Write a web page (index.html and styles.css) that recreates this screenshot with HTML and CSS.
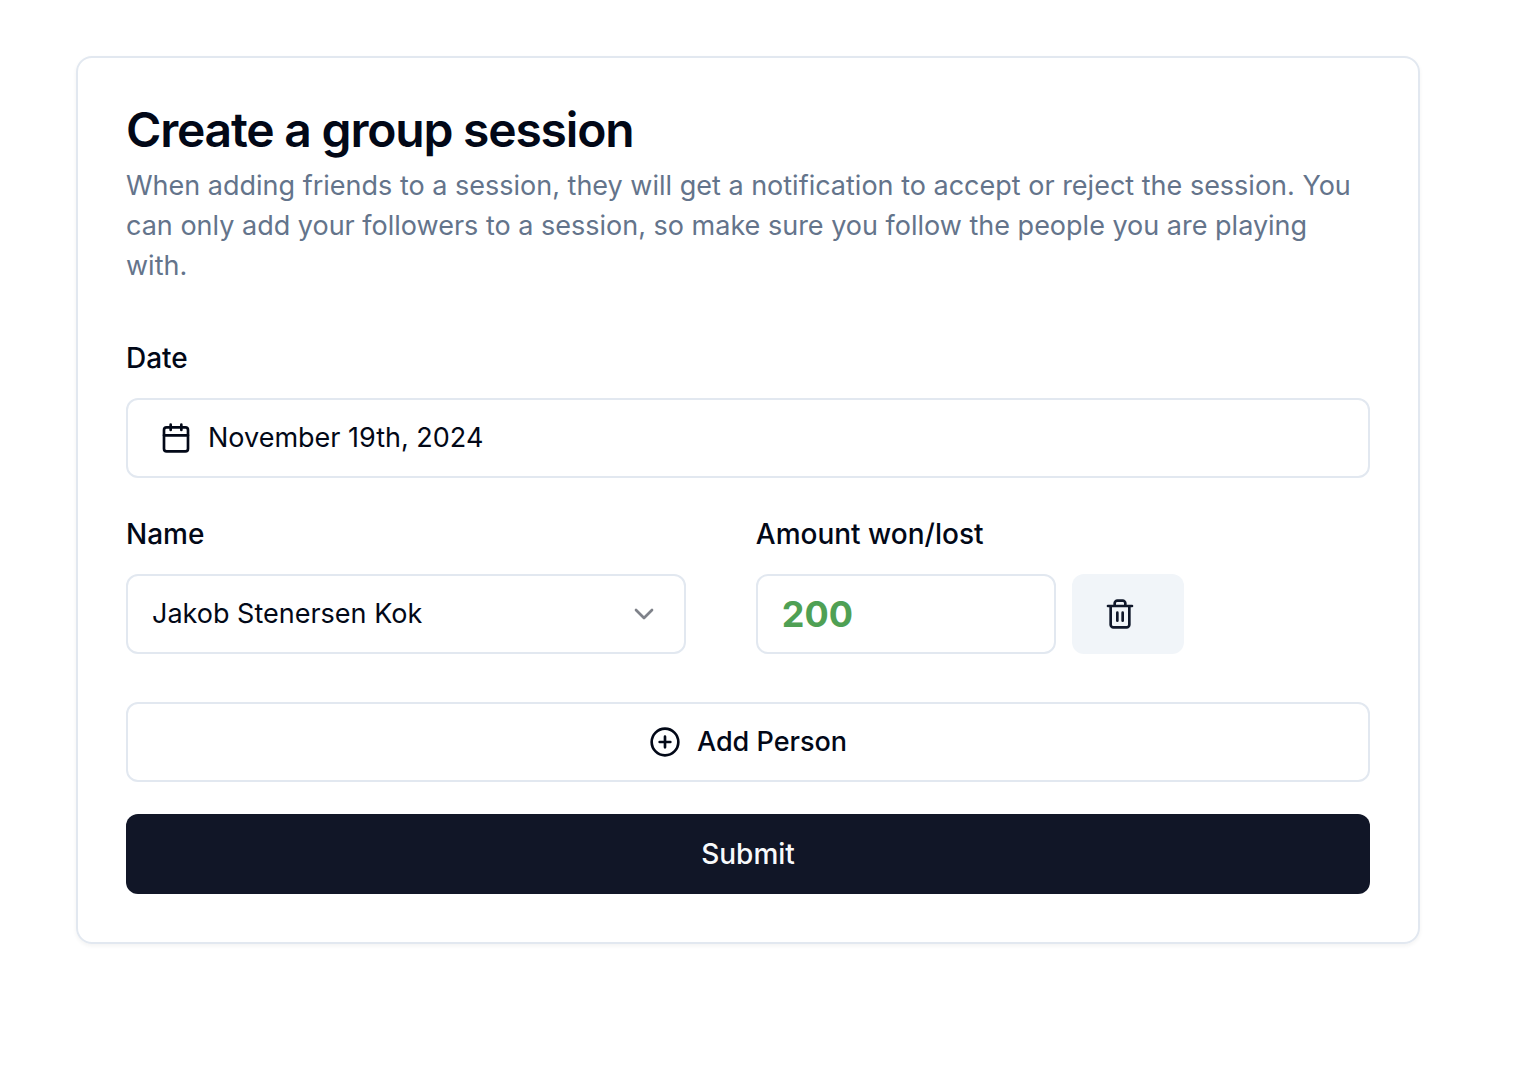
FILE: index.html
```html
<!DOCTYPE html>
<html lang="en">
<head>
<meta charset="utf-8">
<meta name="viewport" content="width=device-width, initial-scale=1">
<title>Create a group session</title>
<link rel="stylesheet" href="styles.css">
</head>
<body>
<main class="page">
  <section class="card">
    <header class="card-header">
      <h1 class="title">Create a group session</h1>
      <p class="description">When adding friends to a session, they will get a notification to accept or reject the session. You can only add your followers to a session, so make sure you follow the people you are playing with.</p>
    </header>
    <form class="form">
      <div class="field">
        <label class="label" for="date">Date</label>
        <button class="control date-button" id="date" type="button">
          <svg class="icon" viewBox="0 0 24 24" aria-hidden="true"><path d="M8 2v4M16 2v4M3 10h18"/><rect x="3" y="4" width="18" height="18" rx="2"/></svg>
          <span>November 19th, 2024</span>
        </button>
      </div>
      <div class="person">
        <div class="field">
          <label class="label" for="name">Name</label>
          <div class="select-wrap">
            <select class="control select" id="name"><option>Jakob Stenersen Kok</option></select>
            <svg class="icon chevron" viewBox="0 0 24 24" aria-hidden="true"><path d="m6 9 6 6 6-6"/></svg>
          </div>
        </div>
        <div class="field">
          <label class="label" for="amount">Amount won/lost</label>
          <div class="amount-row">
            <input class="control amount" id="amount" type="text" inputmode="numeric" value="200">
            <button class="delete" type="button" aria-label="Remove person">
              <svg class="icon" viewBox="0 0 24 24" aria-hidden="true"><path d="M3 6h18M19 6v14c0 1-1 2-2 2H7c-1 0-2-1-2-2V6M8 6V4c0-1 1-2 2-2h4c1 0 2 1 2 2v2M10 11v6M14 11v6"/></svg>
            </button>
          </div>
        </div>
      </div>
      <div class="actions">
        <button class="control add" type="button">
          <svg class="icon" viewBox="0 0 24 24" aria-hidden="true"><circle cx="12" cy="12" r="10"/><path d="M8 12h8M12 8v8"/></svg>
          <span>Add Person</span>
        </button>
        <button class="submit" type="submit">Submit</button>
      </div>
    </form>
  </section>
</main>
</body>
</html>
```
FILE: styles.css
```css
*, *::before, *::after { box-sizing: border-box; }

body {
  margin: 0;
  background: #fff;
  color: #020817;
  font: 400 27px/40px Inter, "Liberation Sans", sans-serif;
}

button, input, select { font: inherit; color: inherit; }

.page { padding: 56px 94px 56px 76px; }

.card {
  padding: 48px;
  border: 2px solid #e2e8f0;
  border-radius: 16px;
  box-shadow: 0 2px 4px rgb(0 0 0 / 5%);
}

.card-header { margin-bottom: 48px; }

.title {
  margin: 0 0 12px;
  font-size: 48px;
  font-weight: 600;
  line-height: 48px;
  letter-spacing: -0.025em;
}

.description { margin: 0; color: #64748b; }

.form { display: flex; flex-direction: column; gap: 32px; }

.field { display: flex; flex-direction: column; gap: 16px; min-width: 0; }

.label { font-size: 28px; font-weight: 500; line-height: 48px; }

.control {
  width: 100%;
  height: 80px;
  border: 2px solid #e2e8f0;
  border-radius: 12px;
  background: #fff;
}

.icon {
  flex: none;
  width: 32px;
  height: 32px;
  fill: none;
  stroke: currentColor;
  stroke-width: 2;
  stroke-linecap: round;
  stroke-linejoin: round;
}

.date-button {
  display: flex;
  align-items: center;
  gap: 16px;
  padding: 0 32px;
  text-align: left;
}

.person { display: grid; grid-template-columns: 45% 1fr; column-gap: 70px; }

.select-wrap { display: grid; align-items: center; }

.select-wrap > * { grid-area: 1 / 1; }

.select { appearance: none; padding: 0 64px 0 24px; }

.chevron {
  justify-self: end;
  margin-right: 26px;
  opacity: 0.5;
  pointer-events: none;
}

.amount-row { display: flex; gap: 16px; }

.amount {
  flex: 0 1 300px;
  min-width: 0;
  padding: 0 24px;
  color: #4fa054;
  font-size: 36px;
  font-weight: 700;
}

.delete {
  display: flex;
  flex: none;
  align-items: center;
  width: 112px;
  height: 80px;
  padding: 0 32px;
  border: 0;
  border-radius: 12px;
  background: #f1f5f9;
  color: #0f172a;
}

.actions { display: flex; flex-direction: column; gap: 32px; margin-top: 16px; }

.add {
  display: flex;
  align-items: center;
  justify-content: center;
  gap: 16px;
  font-weight: 500;
}

.submit {
  height: 80px;
  border: 0;
  border-radius: 12px;
  background: #111627;
  color: #f8fafc;
  font-size: 28px;
  font-weight: 500;
}
```
